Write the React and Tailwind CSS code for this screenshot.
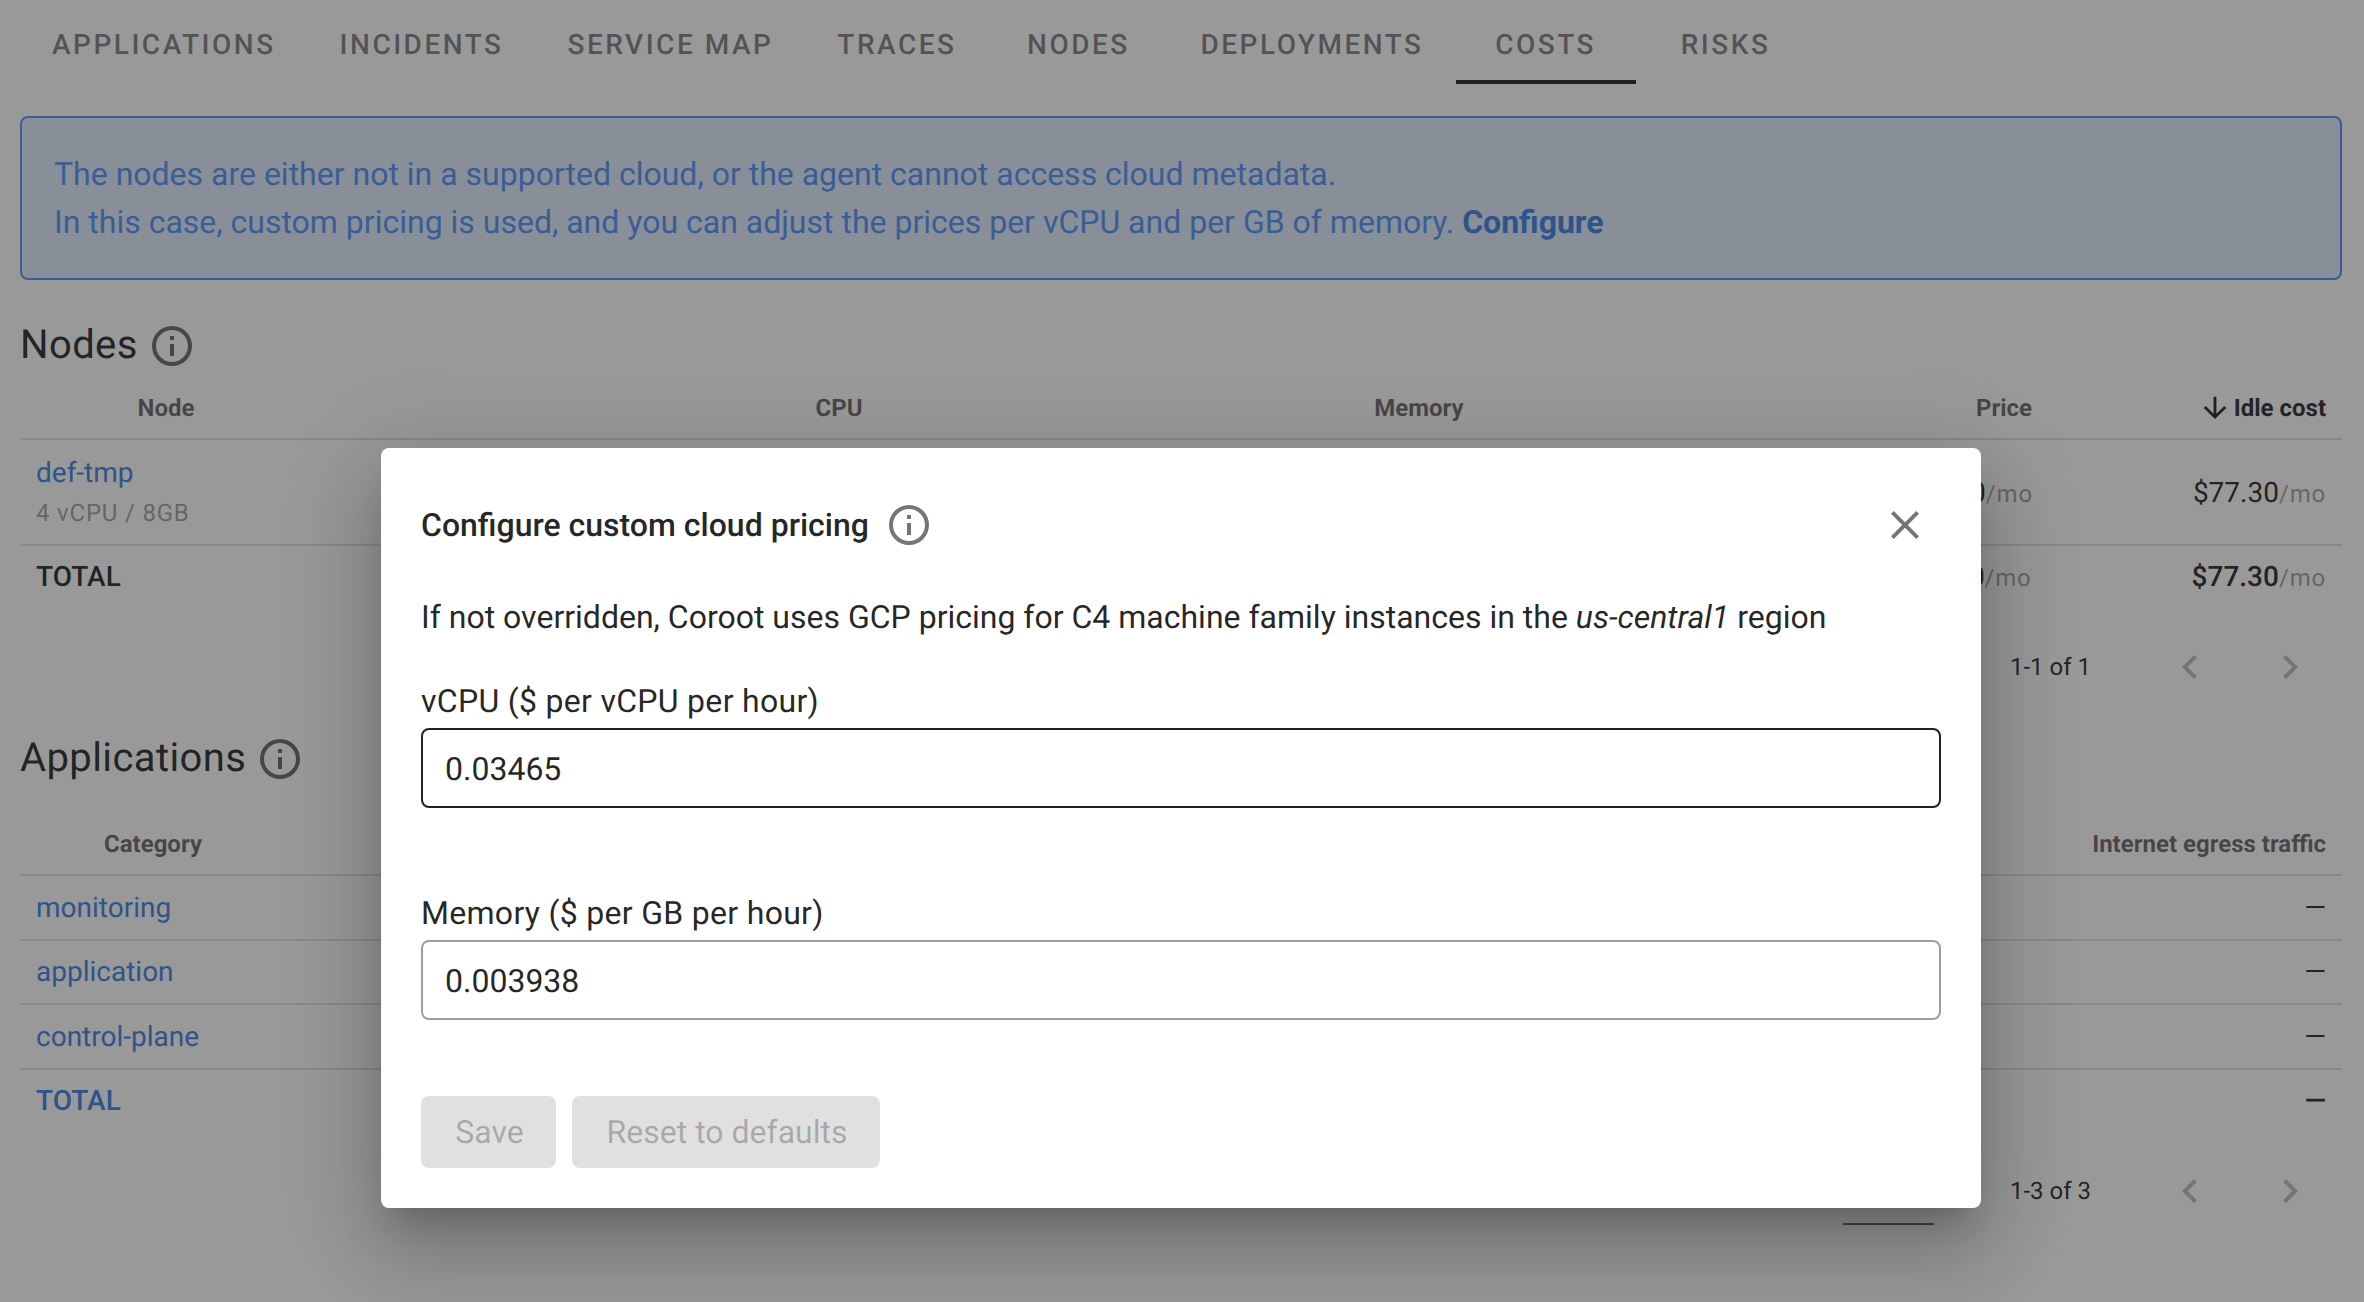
const INFO = "M11,9H13V7H11M12,20C7.59,20 4,16.41 4,12C4,7.59 7.59,4 12,4C16.41,4 20,7.59 20,12C20,16.41 16.41,20 12,20M12,2A10,10 0 0,0 2,12A10,10 0 0,0 12,22A10,10 0 0,0 22,12A10,10 0 0,0 12,2M11,17H13V11H11V17Z";
const CLOSE = "M19,6.41L17.59,5L12,10.59L6.41,5L5,6.41L10.59,12L5,17.59L6.41,19L12,13.41L17.59,19L19,17.59L13.41,12L19,6.41Z";
const LEFT = "M15.41,16.58L10.83,12L15.41,7.41L14,6L8,12L14,18L15.41,16.58Z";
const RIGHT = "M8.59,16.58L13.17,12L8.59,7.41L10,6L16,12L10,18L8.59,16.58Z";
const ARROW_DOWN = "M11,4H13V16L18.5,10.5L19.92,11.92L12,19.84L4.08,11.92L5.5,10.5L11,16V4Z";

const Icon = ({ d, className }) => (
  <svg viewBox="0 0 24 24" className={className} fill="currentColor">
    <path d={d} />
  </svg>
);

const tabs = ["APPLICATIONS", "INCIDENTS", "SERVICE MAP", "TRACES", "NODES", "DEPLOYMENTS", "COSTS", "RISKS"];

const Mo = () => <span className="text-[24px] font-normal tracking-[0.8px] text-black/40">/mo</span>;

const Heading = ({ children }) => (
  <div className="flex h-12 items-center gap-[10px] text-[40px] leading-none tracking-[0.4px] text-black/87">
    <span className="-mt-[3px]">{children}</span>
    <Icon d={INFO} className="h-12 w-12 shrink-0 text-black/60" />
  </div>
);

const Footer = ({ label, className }) => (
  <div className={`flex items-center justify-end pr-[28px] ${className}`}>
    <div className="h-[68px] w-[91px] border-b-2 border-black/60" />
    <span className="ml-[76px] w-[156px] text-[24px] text-black/87">{label}</span>
    <Icon d={LEFT} className="h-12 w-12 text-black/26" />
    <Icon d={RIGHT} className="ml-[52px] h-12 w-12 text-black/26" />
  </div>
);

const Th = ({ children, className = "" }) => (
  <div className={`text-[24px] font-bold text-black/60 ${className}`}>{children}</div>
);

const categories = ["monitoring", "application", "control-plane"];

const Page = () => (
  <div className="pl-5 pr-[22px]">
    {/* tabs */}
    <div className="flex">
      {tabs.map((t) => (
        <div
          key={t}
          className="relative flex h-[84px] min-w-[180px] items-center justify-center px-8 pt-[6px] text-[28px] font-medium tracking-[2.5px] text-black/52"
        >
          {t}
          {t === "COSTS" && <div className="absolute inset-x-0 bottom-0 h-1 bg-[#212121]" />}
        </div>
      ))}
    </div>

    <div className="mt-8 rounded-lg border-2 border-[#4e93f8] bg-[#e2ecff] px-8 py-8 text-[32px] leading-[48px] text-[#4e93f8]">
      <div>The nodes are either not in a supported cloud, or the agent cannot access cloud metadata.</div>
      <div>
        In this case, custom pricing is used, and you can adjust the prices per vCPU and per GB of memory.{" "}
        <span className="font-bold text-[#3a80e6]">Configure</span>
      </div>
    </div>

    {/* nodes */}
    <div className="mt-[42px]">
      <Heading>Nodes</Heading>
    </div>
    <div className="grid h-[70px] grid-cols-[292px_1054px_106px_576px_294px] items-center border-b-2 border-black/12 pt-[7px]">
      <Th className="text-center">Node</Th>
      <Th className="text-center">CPU</Th>
      <Th className="text-center">Memory</Th>
      <Th className="pr-4 text-right">Price</Th>
      <Th className="flex items-center justify-end pr-4 text-black/87">
        <Icon d={ARROW_DOWN} className="mr-[2px] h-[34px] w-[34px]" />
        Idle cost
      </Th>
    </div>
    <div className="flex h-[106px] items-center justify-between border-b-2 border-black/12 px-4 pt-[2px]">
      <div>
        <div className="text-[28px] leading-[40px] text-[#3a80e6]">def-tmp</div>
        <div className="text-[24px] leading-[40px] tracking-[0.8px] text-black/40">4 vCPU / 8GB</div>
      </div>
      <div className="flex items-baseline text-[28px] text-black/87">
        <div className="mr-[160px]">
          $110.60
          <Mo />
        </div>
        <div>
          $77.30
          <Mo />
        </div>
      </div>
    </div>
    <div className="flex h-[60px] items-center justify-between px-4 pt-[2px] text-[28px] font-medium text-black/87">
      <div>TOTAL</div>
      <div className="flex items-baseline">
        <div className="mr-[160px]">
          $110.60
          <Mo />
        </div>
        <div>
          $77.30
          <Mo />
        </div>
      </div>
    </div>
    <Footer label="1-1 of 1" className="h-[121px]" />

    {/* applications */}
    <div className="mt-[8px]">
      <Heading>Applications</Heading>
    </div>
    <div className="flex h-[93px] items-center justify-between border-b-2 border-black/12 pt-[31px]">
      <Th className="w-[266px] text-center">Category</Th>
      <Th className="pr-4 text-right">Internet egress traffic</Th>
    </div>
    {categories.map((c) => (
      <div
        key={c}
        className="flex h-[64.67px] items-center justify-between border-b-2 border-black/12 px-4 pt-[1px] text-[28px]"
      >
        <span className="text-[#3a80e6]">{c}</span>
        <span className="text-black/87">—</span>
      </div>
    ))}
    <div className="flex h-[60px] items-center justify-between px-4 pt-[3px] text-[28px] font-medium">
      <span className="text-[#3a80e6]">TOTAL</span>
      <span className="text-black/87">—</span>
    </div>
    <Footer label="1-3 of 3" className="h-[122px]" />
  </div>
);

const Modal = () => (
  <div className="absolute left-[381px] top-[448px] h-[760px] w-[1600px] rounded-lg bg-white px-10 text-[32px] text-black/87 shadow-[0_22px_30px_-14px_rgba(0,0,0,0.2),0_48px_76px_6px_rgba(0,0,0,0.14),0_18px_92px_16px_rgba(0,0,0,0.12)]">
    <div className="flex h-[154px] items-center justify-between pr-3">
      <div className="flex items-center gap-[16px]">
        <span className="font-medium">Configure custom cloud pricing</span>
        <Icon d={INFO} className="h-12 w-12 text-black/54" />
      </div>
      <Icon d={CLOSE} className="h-12 w-12 text-black/54" />
    </div>
    <div className="-mt-[9px] h-[48px] leading-[48px]">
      If not overridden, Coroot uses GCP pricing for C4 machine family instances in the <i>us-central1</i> region
    </div>
    <div className="mt-[36px] h-[51px] leading-[48px] tracking-[0.3px]">vCPU ($ per vCPU per hour)</div>
    <div className="flex h-[80px] items-center rounded-lg border-2 border-[#212121] px-[22px] pt-[2px]">0.03465</div>
    <div className="mt-[81px] h-[51px] leading-[48px] tracking-[0.3px]">Memory ($ per GB per hour)</div>
    <div className="flex h-[80px] items-center rounded-lg border-2 border-black/38 px-[22px] pt-[2px]">0.003938</div>
    <div className="mt-[76px] flex gap-4">
      <div className="flex h-[72px] w-[135px] items-center justify-center rounded-lg bg-black/12 pl-[2px] text-black/26">Save</div>
      <div className="flex h-[72px] w-[308px] items-center justify-center rounded-lg bg-black/12 pl-[2px] text-black/26">
        Reset to defaults
      </div>
    </div>
  </div>
);

export default function App() {
  return (
    <div className="relative h-[1302px] overflow-hidden bg-white font-['Roboto',sans-serif] [text-rendering:geometricPrecision]">
      <Page />
      <div className="absolute inset-0 bg-[#212121]/46" />
      <Modal />
    </div>
  );
}
